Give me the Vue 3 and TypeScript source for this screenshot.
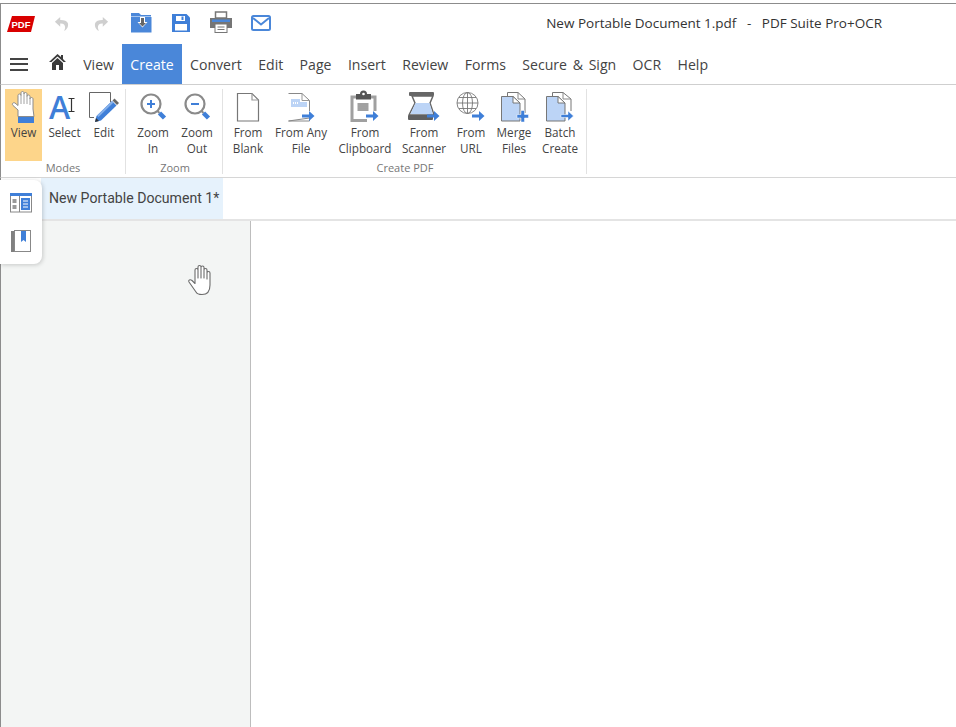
<script setup lang="ts">
const menus: string[] = ['View', 'Create', 'Convert', 'Edit', 'Page', 'Insert', 'Review', 'Forms', 'Secure & Sign', 'OCR', 'Help']
</script>

<template>
  <div class="app">
    <header class="titlebar">
      <svg class="pdf" width="30" height="18" viewBox="0 0 30 18">
        <path d="M5 1H28L24 17H0Z" fill="#d90000" />
        <text x="14" y="12.500" text-anchor="middle" class="pdf-text">PDF</text>
      </svg>
      <svg class="qa undo" width="16" height="16" viewBox="0 0 18 18">
        <path d="M7 1 1 6.500 7 12V8.500C10.500 8.300 12.800 9.800 12.500 13.500L11.500 17C15.500 14.500 16.500 11 15.500 8 14.500 5.500 11.500 4.500 7 4.600Z" fill="#cfcfcf" />
      </svg>
      <svg class="qa redo" width="16" height="16" viewBox="0 0 18 18">
        <g transform="translate(18 0) scale(-1 1)">
          <path d="M7 1 1 6.500 7 12V8.500C10.500 8.300 12.800 9.800 12.500 13.500L11.500 17C15.500 14.500 16.500 11 15.500 8 14.500 5.500 11.500 4.500 7 4.600Z" fill="#cfcfcf" />
        </g>
      </svg>
      <svg class="qa folder" width="21" height="20" viewBox="0 0 21 20">
        <path d="M0 2V0H8L10 2H20V3.500H0Z" fill="#4a87d9" />
        <path d="M0 4H20.500V19.500H0Z" fill="#4a87d9" />
        <path d="M9 4H14V9H16.500L11.500 14.500 6.500 9H9Z" fill="#fff" />
        <path d="M10 5H13V10H15L11.500 13.500 8 10H10Z" fill="#666" />
      </svg>
      <svg class="qa save" width="18" height="18" viewBox="0 0 18 18">
        <path d="M0 0H14.500L18 3.500V18H0Z" fill="#3f7fd8" />
        <rect x="4" y="2" width="9" height="5" fill="#fff" />
        <rect x="9.500" y="2.500" width="2" height="3.500" fill="#3f7fd8" />
        <rect x="3" y="10" width="12" height="6.500" fill="#fff" />
      </svg>
      <svg class="qa print" width="22" height="22" viewBox="0 0 22 22">
        <rect x="5.500" y="1" width="11" height="6" fill="#fff" stroke="#777" stroke-width="1.500" />
        <path d="M0 7H22V17H0Z" fill="#757575" />
        <rect x="2" y="8.500" width="18" height="2.500" fill="#4a87d9" />
        <rect x="5" y="13" width="12" height="8.500" fill="#fff" stroke="#777" />
        <path d="M7.500 16H14.500M7.500 18.500H14.500" stroke="#777" />
      </svg>
      <svg class="qa mail" width="20" height="16" viewBox="0 0 20 16">
        <rect x="1" y="1" width="18" height="14" rx="1.500" fill="#fff" stroke="#4a87d9" stroke-width="2" />
        <path d="M2 3 10 9.500 18 3" fill="none" stroke="#4a87d9" stroke-width="2" />
      </svg>
      <div class="title">New Portable Document 1.pdf&nbsp;&nbsp; - &nbsp;&nbsp;PDF Suite Pro+OCR</div>
    </header>

    <nav class="menubar">
      <span class="burger"><i></i><i></i><i></i></span>
      <svg class="home" width="17" height="16" viewBox="0 0 17 16">
        <path d="M8.500 0 0 8H2.500L8.500 2.500 14.500 8H17L14 5V1H12V3Z" fill="#3a3a3a" />
        <path d="M3 9 8.500 4 14 9V16H10V11H7V16H3Z" fill="#3a3a3a" />
      </svg>
      <a v-for="m in menus" :key="m" class="menu" :class="{ active: m === 'Create' }">{{ m }}</a>
    </nav>

    <section class="ribbon">
      <div class="group modes">
        <div class="items">
          <div class="item w37 selected">
            <svg class="ico" width="37" height="35" viewBox="0 0 37 35">
              <path d="M13 27.500V21L8 16.500C6.500 15 8 13 10 14L13 16.500V6.500C13 4.500 16 4.500 16 6.500V4C16 2 19 2 19 4V5C19 3 22 3 22 5V7.500C22 5.500 25 5.500 25 7.500V10C25 8 28 8 28 10V20L29 27.500Z" fill="#fff" stroke="#8b8b8b" stroke-width="1" stroke-linejoin="round" />
              <path d="M16 6.500V15M19 5V15M22 7.500V15M25 10V16" stroke="#8b8b8b" stroke-width="0.800" fill="none" />
              <rect x="13" y="28" width="16" height="6" fill="#3f7fd8" />
            </svg>
            <span>View</span>
          </div>
          <div class="item w45">
            <svg class="ico" width="45" height="35" viewBox="0 0 45 35">
              <text x="7" y="30" class="big-a">A</text>
              <path d="M26.500 9.500H32.500M29.500 9.500V22.500M26.500 22.500H32.500" stroke="#333" stroke-width="1.200" fill="none" />
            </svg>
            <span>Select</span>
          </div>
          <div class="item w34">
            <svg class="ico" width="34" height="35" viewBox="0 0 34 35">
              <path d="M23.500 13V3.500H2.500V28.500H7" fill="#fff" stroke="#666" />
              <path d="M8 33 9.500 27 25 12 29.500 16.500 14 31.500Z" fill="#3f7fd8" />
              <path d="M10 26.500 25 12 26.500 13.500 11.500 28Z" fill="#85b0ea" />
              <path d="M25.500 11.500 27.500 9.500 32 14 30 16Z" fill="#666" />
              <path d="M8 33 9 29 12 32Z" fill="#333" />
            </svg>
            <span>Edit</span>
          </div>
        </div>
        <div class="glabel">Modes</div>
      </div>

      <div class="group zoom">
        <div class="items">
          <div class="item w44">
            <svg class="ico" width="44" height="35" viewBox="0 0 44 35">
              <circle cx="20" cy="15" r="9.500" fill="#fff" stroke="#8a8a8a" stroke-width="2.200" />
              <path d="M16 15H24M20 11V19" stroke="#3f7fd8" stroke-width="2" />
              <path d="M26.500 22 28.500 24" stroke="#8a8a8a" stroke-width="2" />
              <path d="M28.500 24 33.500 29" stroke="#3f7fd8" stroke-width="4.500" />
            </svg>
            <span>Zoom</span><span>In</span>
          </div>
          <div class="item w44">
            <svg class="ico" width="44" height="35" viewBox="0 0 44 35">
              <circle cx="20" cy="15" r="9.500" fill="#fff" stroke="#8a8a8a" stroke-width="2.200" />
              <path d="M16 15H24" stroke="#3f7fd8" stroke-width="2" />
              <path d="M26.500 22 28.500 24" stroke="#8a8a8a" stroke-width="2" />
              <path d="M28.500 24 33.500 29" stroke="#3f7fd8" stroke-width="4.500" />
            </svg>
            <span>Zoom</span><span>Out</span>
          </div>
        </div>
        <div class="glabel">Zoom</div>
      </div>

      <div class="group create">
        <div class="items">
          <div class="item w40">
            <svg class="ico" width="40" height="35" viewBox="0 0 40 35">
              <path d="M9.500 4.500H24L30.500 11V32H9.500Z" fill="#fff" stroke="#777" stroke-width="1.200" />
              <path d="M24 4.500V11H30.500" fill="none" stroke="#999" stroke-width="1.200" />
            </svg>
            <span>From</span><span>Blank</span>
          </div>
          <div class="item w66">
            <svg class="ico" width="66" height="35" viewBox="0 0 66 35">
              <path d="M20.500 4.500H34L41.500 11.500V22M41.500 29V32H20.500Z" fill="#fff" stroke="#888" stroke-width="1" />
              <path d="M34 4.500V11.500H41.500" fill="none" stroke="#999" stroke-width="1" />
              <rect x="23" y="10" width="9" height="8" fill="#bcd4f6" />
              <rect x="32" y="13" width="7" height="5" fill="#bcd4f6" />
              <path d="M25 14H31" stroke="#fff" stroke-dasharray="1 1" stroke-width="2" />
              <path d="M34 25.500H41V22L46.500 27 41 32V28.500H34Z" fill="#3f7fd8" />
            </svg>
            <span>From Any</span><span>File</span>
          </div>
          <div class="item w62">
            <svg class="ico" width="62" height="35" viewBox="0 0 62 35">
              <path d="M41 22V8H18V31.500H33" fill="none" stroke="#a0a0a0" stroke-width="3" />
              <rect x="20" y="10" width="19" height="20" fill="#fff" />
              <path d="M22 5H26A3.500 3.500 0 0 1 33 5H37V10.500H22Z" fill="#555" />
              <circle cx="29.500" cy="5" r="1.300" fill="#fff" />
              <path d="M23.500 15H34.500M23.500 17H34.500M23.500 19H34.500M23.500 21H34.500" stroke="#444" />
              <path d="M32 25.500H39V22L44.500 27 39 32V28.500H32Z" fill="#3f7fd8" />
            </svg>
            <span>From</span><span>Clipboard</span>
          </div>
          <div class="item w56">
            <svg class="ico" width="56" height="35" viewBox="0 0 56 35">
              <path d="M16 7H37L34 14 38 26H13L19 14Z" fill="#fff" stroke="#666" stroke-width="1.500" stroke-linejoin="round" />
              <path d="M19.500 14H33.500L37 25H14.500Z" fill="#bcd4f6" />
              <rect x="13" y="3" width="25" height="4" rx="1" fill="#666" />
              <rect x="12" y="26" width="25" height="5" rx="1" fill="#606060" />
              <path d="M31 25.500H38V22L43.500 27 38 32V28.500H31Z" fill="#3f7fd8" />
            </svg>
            <span>From</span><span>Scanner</span>
          </div>
          <div class="item w38">
            <svg class="ico" width="38" height="35" viewBox="0 0 38 35">
              <g fill="none" stroke="#777" stroke-width="0.900">
                <circle cx="15.500" cy="14" r="10.500" />
                <ellipse cx="15.500" cy="14" rx="5" ry="10.500" />
                <path d="M15.500 3.500V24.500M5 14H26M7 8.500H24M7 19.500H24" />
              </g>
              <path d="M20 25.500H27V22L32.500 27 27 32V28.500H20Z" fill="#3f7fd8" />
            </svg>
            <span>From</span><span>URL</span>
          </div>
          <div class="item w48">
            <svg class="ico" width="48" height="35" viewBox="0 0 48 35">
              <path d="M17.500 7V3.500H28L35 10V24" fill="#fff" stroke="#777" />
              <path d="M28 3.500V10H35" fill="none" stroke="#888" />
              <path d="M11.500 7.500H23L30 14V32H11.500Z" fill="#bcd4f6" stroke="#777" />
              <path d="M23 7.500V14H30Z" fill="#fff" stroke="#777" />
              <path d="M27 25.500H31V21.500H34.500V25.500H38.500V29H34.500V33H31V29H27Z" fill="#3f7fd8" stroke="#fff" stroke-width="0.500" />
            </svg>
            <span>Merge</span><span>Files</span>
          </div>
          <div class="item w44">
            <svg class="ico" width="44" height="35" viewBox="0 0 44 35">
              <path d="M14.500 7V3.500H25L33 10V22" fill="#fff" stroke="#777" />
              <path d="M25 3.500V10H33" fill="none" stroke="#888" />
              <path d="M8.500 7.500H20L27 14V32H8.500Z" fill="#bcd4f6" stroke="#777" />
              <path d="M20 7.500V14H27Z" fill="#fff" stroke="#777" />
              <path d="M23 25.500H30V22L35.500 27 30 32V28.500H23Z" fill="#3f7fd8" stroke="#fff" stroke-width="0.500" />
            </svg>
            <span>Batch</span><span>Create</span>
          </div>
        </div>
        <div class="glabel">Create PDF</div>
      </div>
    </section>

    <div class="tabs">
      <div class="tab">New Portable Document 1*</div>
    </div>

    <main class="workspace">
      <aside class="sidebar"></aside>
      <div class="canvas"></div>

      <div class="floating">
        <svg width="22" height="20" viewBox="0 0 22 20">
          <rect x="0.500" y="1" width="21" height="18" fill="#fff" stroke="#888" />
          <rect x="0" y="0" width="22" height="3" fill="#3f7fd8" />
          <rect x="9" y="3" width="1" height="16" fill="#888" />
          <rect x="2.500" y="6" width="4" height="4" fill="#999" />
          <rect x="2.500" y="12" width="4" height="4" fill="#999" />
          <rect x="11" y="5" width="9" height="12" fill="#3f7fd8" />
          <path d="M13 8H18M13 11H18M13 14H18" stroke="#fff" />
        </svg>
        <svg width="20" height="22" viewBox="0 0 20 22">
          <rect x="0" y="1" width="3" height="21" fill="#808080" />
          <rect x="3.500" y="0.500" width="16" height="21" fill="#fff" stroke="#888" />
          <path d="M10 1H15V12L12.500 10 10 12Z" fill="#3f7fd8" />
        </svg>
      </div>

      <svg class="cursor" width="28" height="32" viewBox="0 0 28 32">
        <path d="M9 28 2 18C1 16 3 15 5 16.500L8 19.500V6C8 4 11 4 11 6V14 3C11 1 14 1 14 3V14 3.500C14 1.500 17 1.500 17 3.500V14 6C17 4 20 4 20 6V15 9C20 7 23 7 23 9V21C23 26 21 30.500 15 30.500 12 30.500 10 30 9 28Z" fill="#fff" stroke="#6c6c6c" stroke-width="1.100" stroke-linejoin="round" />
      </svg>
    </main>
  </div>
</template>

<style>
html, body { margin: 0; padding: 0; background: #fff; overflow: hidden; }
</style>

<style scoped>
.app {
  width: 956px;
  height: 727px;
  box-sizing: border-box;
  margin: 0;
  padding-top: 3px;
  display: flex;
  flex-direction: column;
  font-family: "Open Sans", "Liberation Sans", sans-serif;
  color: #444;
  overflow: hidden;
}
.titlebar {
  height: 41px;
  flex: none;
  box-sizing: border-box;
  border-top: 1px solid #8c8c8c;
  border-left: 1px solid #8c8c8c;
  display: flex;
  align-items: center;
  position: relative;
}
.pdf { margin-left: 6px; }
.pdf-text { font: bold 9.500px "Liberation Sans", sans-serif; fill: #fff; }
.qa { flex: none; }
.undo { margin-left: 17px; }
.redo { margin-left: 23px; }
.folder { margin-left: 22px; margin-top: -3px; }
.save { margin-left: 20px; margin-top: -3px; }
.print { margin-left: 20px; margin-top: -5px; }
.mail { margin-left: 19px; margin-top: -3px; }
.title {
  margin-left: auto;
  margin-right: 74px;
  font-size: 13.500px;
  color: #333;
  margin-top: -3px;
  white-space: nowrap;
}
.menubar {
  height: 41px;
  flex: none;
  box-sizing: border-box;
  border-left: 1px solid #8c8c8c;
  border-bottom: 1px solid #cfcfcf;
  display: flex;
  align-items: stretch;
  font-size: 14.100px;
  word-spacing: 2px;
}
.burger {
  margin-left: 9px;
  width: 18px;
  display: flex;
  flex-direction: column;
  justify-content: center;
  gap: 3.500px;
}
.burger i { display: block; height: 2px; background: #444; }
.home { margin-left: 21px; margin-top: 10px; }
.menu {
  padding: 0 8.200px;
  display: flex;
  align-items: center;
  color: #444;
  white-space: nowrap;
}
.home + .menu { margin-left: 9px; }
.menu.active { background: #4a87d9; color: #fff; }
.ribbon {
  height: 93px;
  flex: none;
  box-sizing: border-box;
  border-left: 1px solid #8c8c8c;
  border-bottom: 1px solid #d6d6d6;
  display: flex;
  padding-top: 4px;
}
.group {
  display: flex;
  flex-direction: column;
  border-right: 1px solid #e2e2e2;
  height: 85px;
}
.modes { padding-left: 4px; padding-right: 4px; }
.zoom { padding-left: 5px; padding-right: 3px; }
.create { padding-left: 5px; padding-right: 4px; }
.items { display: flex; flex: none; height: 72px; }
.item {
  display: flex;
  flex-direction: column;
  align-items: center;
  font-size: 11.700px;
  line-height: 16px;
  color: #444;
  white-space: nowrap;
  box-sizing: border-box;
}
.selected { background: #fdd58a; }
.ico { display: block; flex: none; height: 35px; overflow: visible; }
.w34 { width: 34px; }
.w37 { width: 37px; }
.w38 { width: 38px; }
.w40 { width: 40px; }
.w44 { width: 44px; }
.w45 { width: 45px; }
.w48 { width: 48px; }
.w56 { width: 56px; }
.w62 { width: 62px; }
.w66 { width: 66px; }
.big-a { font: 600 32px "Open Sans", sans-serif; fill: #3f7fd8; }
.glabel {
  text-align: center;
  font-size: 11px;
  line-height: 14px;
  color: #777;
}
.tabs {
  height: 43px;
  flex: none;
  box-sizing: border-box;
  border-left: 1px solid #8c8c8c;
  border-bottom: 2px solid #e4e4e4;
  display: flex;
  padding-left: 40px;
}
.tab {
  background: #e6f2fc;
  padding: 0 4px 2px 8px;
  display: flex;
  align-items: center;
  font: 14.100px Roboto, sans-serif;
  color: #444;
}
.workspace {
  flex: 1;
  display: flex;
  position: relative;
  border-left: 1px solid #8c8c8c;
}
.sidebar {
  width: 249px;
  flex: none;
  background: #f3f5f4;
  border-right: 1px solid #bdbdbd;
}
.canvas { flex: 1; background: #fff; }
.floating {
  position: absolute;
  left: -1px;
  top: -41px;
  width: 42px;
  height: 84px;
  background: #fff;
  border-radius: 0 8px 8px 0;
  box-shadow: 1px 1px 4px rgba(0, 0, 0, 0.18);
  display: flex;
  flex-direction: column;
  align-items: center;
  gap: 17px;
  padding-top: 13px;
  box-sizing: border-box;
}
.cursor { position: absolute; left: 186px; top: 43px; }
</style>
